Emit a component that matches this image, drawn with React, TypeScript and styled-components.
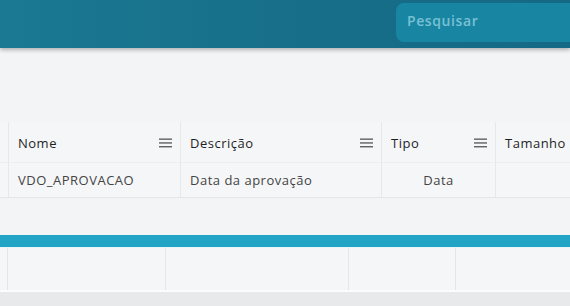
import React from 'react';
import styled, { createGlobalStyle } from 'styled-components';

const GlobalStyle = createGlobalStyle`
    html, body {
        margin: 0;
        padding: 0;
        background: #f3f4f6;
        font-family: "Open Sans", "Noto Sans", sans-serif;
        overflow: hidden;
    }
`;

const Page = styled.div`
    width: 570px;
    height: 306px;
    display: flex;
    flex-direction: column;
    overflow: hidden;
`;

const TopBar = styled.header`
    height: 48px;
    flex-shrink: 0;
    display: flex;
    align-items: flex-start;
    justify-content: flex-end;
    background: linear-gradient(90deg, #1b7993 0%, #176f89 50%, #156984 100%);
    box-shadow: 0 2px 4px rgba(0, 0, 0, 0.28);
    position: relative;
    z-index: 1;
    overflow: hidden;
`;

const SearchBox = styled.div`
    width: 190px;
    height: 39px;
    margin-top: 3px;
    margin-right: -16px;
    border-radius: 8px;
    background: #1886a2;
    display: flex;
    align-items: center;
    padding: 0 0 4px 11px;
    box-sizing: border-box;
`;

const Placeholder = styled.span`
    font-size: 14px;
    font-weight: 600;
    color: #79c0d3;
    letter-spacing: 0.6px;
`;

const Spacer = styled.div`
    height: 74px;
    flex-shrink: 0;
`;

const Grid = styled.div<{ $cols: string }>`
    display: grid;
    grid-template-columns: ${(p) => p.$cols};
    background: #f5f6f8;
`;

const HeadCell = styled.div<{ $first?: boolean }>`
    height: 41px;
    box-sizing: border-box;
    display: flex;
    align-items: center;
    justify-content: space-between;
    padding: 1px 8px 0 9px;
    border-left: ${(p) => (p.$first ? 'none' : '1px solid #e6e8eb')};
    border-bottom: 1px solid #eceef0;
    font-size: 13px;
    font-weight: 500;
    color: #1f1f1f;
    letter-spacing: 0.5px;
    white-space: nowrap;
`;

const BodyCell = styled.div<{ $first?: boolean; $center?: boolean }>`
    height: 35px;
    box-sizing: border-box;
    display: flex;
    align-items: center;
    justify-content: ${(p) => (p.$center ? 'center' : 'flex-start')};
    padding: 0 9px;
    border-left: ${(p) => (p.$first ? 'none' : '1px solid #e6e8eb')};
    border-bottom: 1px solid #e3e5e8;
    font-size: 13px;
    color: #444;
    letter-spacing: 0.5px;
    white-space: nowrap;
`;

const Gap = styled.div`
    height: 37px;
    flex-shrink: 0;
`;

const ProgressBar = styled.div`
    height: 12px;
    flex-shrink: 0;
    background: #22a4c6;
    border-bottom: 1px solid #e9f6f9;
`;

const EmptyCell = styled.div<{ $first?: boolean }>`
    height: 42px;
    border-left: ${(p) => (p.$first ? 'none' : '1px solid #e4e6e9')};
`;

const WhiteLine = styled.div`
    height: 2px;
    background: #fbfcfd;
`;

const Footer = styled.div`
    flex: 1;
    background: #e8e9eb;
`;

const MenuIcon = () => (
    <svg width="13" height="10" viewBox="0 0 13 10">
        <rect x="0" y="0.5" width="13" height="1.3" fill="#555" />
        <rect x="0" y="4.3" width="13" height="1.3" fill="#555" />
        <rect x="0" y="8.1" width="13" height="1.3" fill="#555" />
    </svg>
);

const columns = [
    { title: 'Nome', menu: true },
    { title: 'Descrição', menu: true },
    { title: 'Tipo', menu: true },
    { title: 'Tamanho', menu: false },
];

const row = ['VDO_APROVACAO', 'Data da aprovação', 'Data', ''];

const App = () => (
    <Page>
        <GlobalStyle />
        <TopBar>
            <SearchBox>
                <Placeholder>Pesquisar</Placeholder>
            </SearchBox>
        </TopBar>
        <Spacer />
        <Grid $cols="8px 172px 201px 114px 100px">
            <HeadCell $first />
            {columns.map((c) => (
                <HeadCell key={c.title}>
                    <span>{c.title}</span>
                    {c.menu && <MenuIcon />}
                </HeadCell>
            ))}
            <BodyCell $first />
            {row.map((v, i) => (
                <BodyCell key={i} $center={i === 2}>{v}</BodyCell>
            ))}
        </Grid>
        <Gap />
        <ProgressBar />
        <Grid $cols="7px 158px 183px 107px 140px">
            <EmptyCell $first />
            <EmptyCell />
            <EmptyCell />
            <EmptyCell />
            <EmptyCell />
        </Grid>
        <WhiteLine />
        <Footer />
    </Page>
);

export default App;
